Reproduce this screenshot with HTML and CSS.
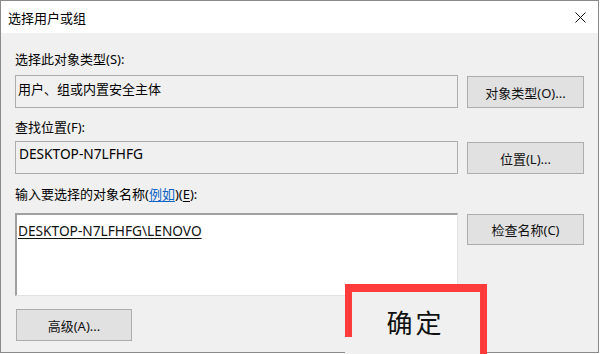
FILE: index.html
```html
<!DOCTYPE html>
<html lang="zh-CN">
<head>
<meta charset="utf-8">
<title>选择用户或组</title>
<link rel="stylesheet" href="styles.css">
</head>
<body>
<div class="window">
  <div class="titlebar">
    <span class="title">选择用户或组</span>
    <svg class="close" width="11" height="11" viewBox="0 0 11 11"><path d="M0.5 0.5 L10.5 10.5 M10.5 0.5 L0.5 10.5" stroke="#111" stroke-width="1"/></svg>
  </div>
  <div class="content">
    <div class="label l1">选择此对象类型(S):</div>
    <div class="row r1">
      <div class="box">用户、组或内置安全主体</div>
      <div class="btn">对象类型(O)...</div>
    </div>
    <div class="label l2">查找位置(F):</div>
    <div class="row r2">
      <div class="box box2"><span class="lat">DESKTOP-N7LFHFG</span></div>
      <div class="btn">位置(L)...</div>
    </div>
    <div class="label l3">输入要选择的对象名称(<span class="link">例如</span>)(<u>E</u>):</div>
    <div class="row r3">
      <div class="box edit"><u class="lat">DESKTOP-N7LFHFG\LENOVO</u></div>
      <div class="btn btn3">检查名称(C)</div>
    </div>
    <div class="btn adv">高级(A)...</div>
  </div>
</div>
<div class="highlight"><span class="ok">确定</span></div>
</body>
</html>
```
FILE: styles.css
```css
html, body {
  margin: 0;
  padding: 0;
  background: #ffffff;
}
body {
  width: 600px;
  height: 354px;
  position: relative;
  overflow: hidden;
  font-family: "Noto Sans", "Noto Sans CJK SC", sans-serif;
  font-size: 13px;
  color: #000;
}
.window {
  box-sizing: border-box;
  width: 599px;
  height: 353px;
  border: 1px solid #8a8a8a;
  background: #f0f0f0;
  display: flex;
  flex-direction: column;
}
.titlebar {
  height: 32px;
  background: #ffffff;
  display: flex;
  align-items: center;
  justify-content: space-between;
  padding: 0 12px 0 7px;
  flex: none;
}
.title {
  font-size: 13px;
  line-height: 16px;
  margin-top: 1px;
}
.close {
  display: block;
  margin-top: 1px;
}
.content {
  padding: 0 13px 0 14px;
  display: flex;
  flex-direction: column;
}
.label {
  height: 16px;
  line-height: 16px;
  white-space: nowrap;
}
.l1 { margin-top: 18px; }
.l2 { margin-top: 11px; }
.l3 { margin-top: 12px; }
.row {
  display: flex;
  gap: 9px;
  align-items: flex-start;
}
.r1 { margin-top: 8px; }
.r2 { margin-top: 6px; }
.r3 { margin-top: 11px; }
.box {
  box-sizing: border-box;
  width: 443px;
  height: 33px;
  border: 1px solid #adadad;
  padding: 5px 2px 0 2px;
  line-height: 16px;
  white-space: nowrap;
}
.box2 {
  padding: 4px 3px 0 3px;
}
.lat {
  font-size: 13.7px;
}
.edit {
  height: 83px;
  background: #ffffff;
  border-top: 2px solid #a0a0a0;
  border-left: 2px solid #a0a0a0;
  border-right: 1px solid #e3e3e3;
  border-bottom: 1px solid #e3e3e3;
  padding: 8px 2px 0 1px;
}
.edit u {
  text-decoration-thickness: 1px;
  text-underline-offset: 2px;
  color: #111;
}
.btn {
  box-sizing: border-box;
  width: 117px;
  height: 32px;
  margin-top: 1px;
  background: #e1e1e1;
  border: 1px solid #adadad;
  display: flex;
  align-items: center;
  justify-content: center;
  white-space: nowrap;
  color: #111;
}
.btn3 {
  height: 31px;
}
.adv {
  width: 116px;
  margin-top: 13px;
  margin-left: 1px;
}
.link {
  color: #0b63c4;
  text-decoration: underline;
  text-underline-offset: 2px;
}
.label u {
  text-underline-offset: 2px;
}
.highlight {
  position: absolute;
  left: 345px;
  top: 284px;
  width: 135px;
  height: 62px;
  background: #f0f0f0;
  border-top: 8px solid #ff3b3b;
  border-right: 7px solid #ff3b3b;
  box-sizing: content-box;
  text-align: center;
}
.highlight::before {
  content: "";
  position: absolute;
  left: 0;
  top: 0;
  width: 7px;
  height: 45px;
  background: #ff3b3b;
}
.ok {
  display: block;
  font-family: "Noto Sans CJK SC", sans-serif;
  font-size: 26px;
  line-height: 30px;
  letter-spacing: 3px;
  margin-top: 15px;
  padding-left: 6px;
  color: #111;
}
```
